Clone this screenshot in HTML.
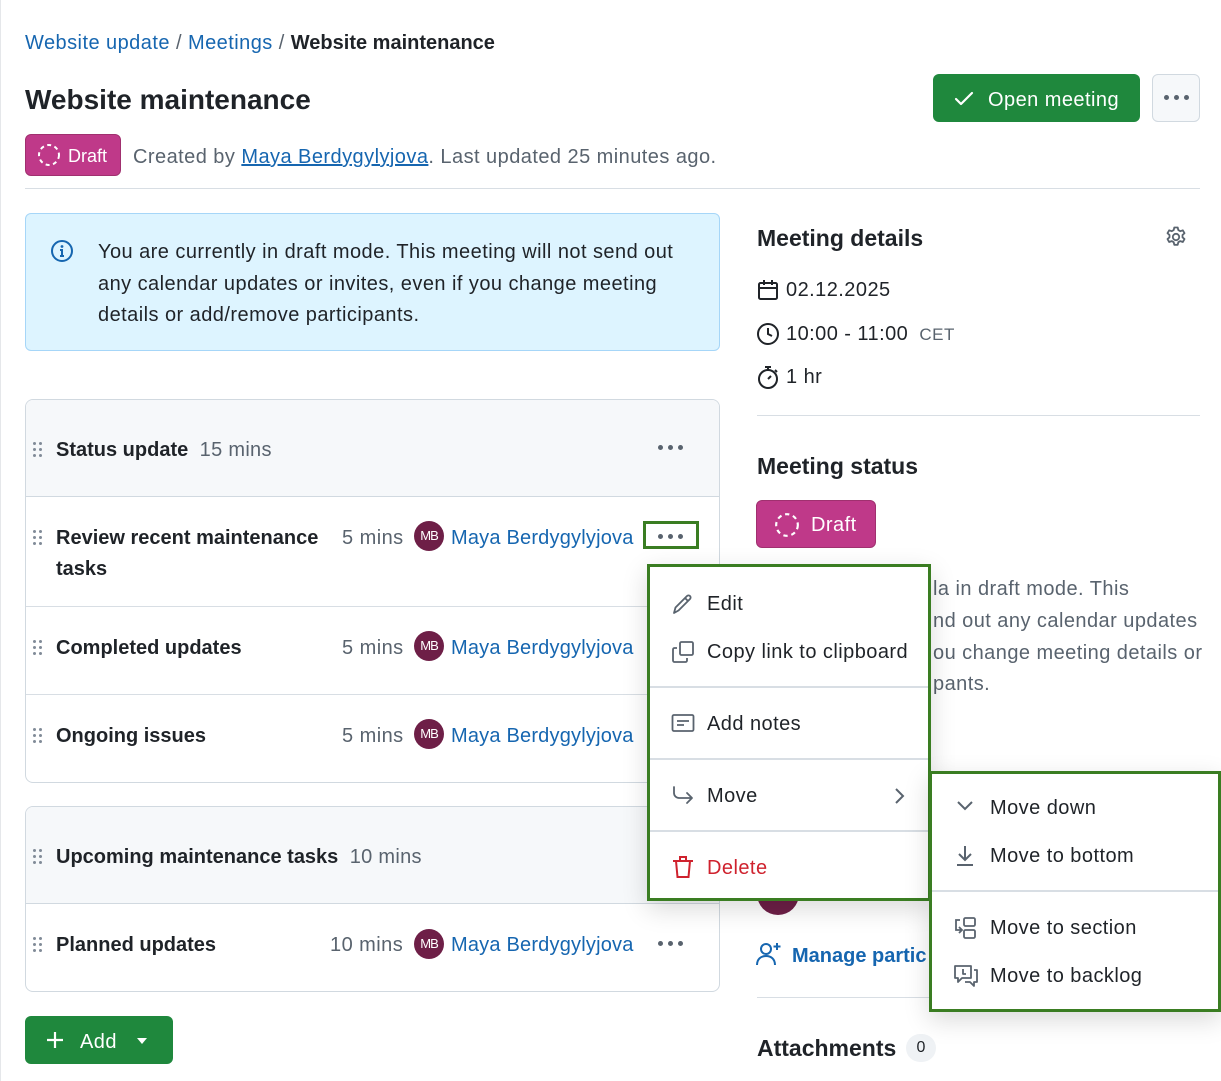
<!DOCTYPE html>
<html><head><meta charset="utf-8"><style>
*{box-sizing:border-box;margin:0;padding:0}
body{width:1221px;height:1081px;position:relative;overflow:hidden;background:#fff;font-family:"Liberation Sans",sans-serif;color:#1f2328}
.a{position:absolute}
.t{position:absolute;white-space:nowrap;height:30px;line-height:30px;font-size:20px;letter-spacing:.45px}
.b{font-weight:bold;letter-spacing:0}
.link{color:#1666b0}
.nm{letter-spacing:.2px}
.mut{color:#59636e}
.dots{position:absolute;width:26px;height:6px}
.dots i{position:absolute;top:0;width:5px;height:5px;border-radius:50%;background:#59636e}
.grip{position:absolute;width:10px;height:16px}
.grip i{position:absolute;width:3px;height:3px;border-radius:50%;background:#818b98}
.av{position:absolute;width:30px;height:30px;border-radius:50%;background:#6e1f47;color:#fff;font-size:13px;line-height:30px;text-align:center;letter-spacing:-1px}
.hr{position:absolute;height:1px;background:#d8dee4}
</style></head><body>
<div class="a" style="left:0;top:0;width:1px;height:1081px;background:#e5e7ea"></div>

<!-- breadcrumb -->
<div class="t" style="left:25px;top:28px"><span class="link">Website update</span> <span style="color:#59636e">/</span> <span class="link">Meetings</span> <span style="color:#59636e">/</span> <span class="b">Website maintenance</span></div>
<div class="t b" style="left:25px;top:83px;font-size:28px;height:34px;line-height:34px">Website maintenance</div>

<div class="a" style="left:25px;top:134px;width:96px;height:42px;background:#bf3989;border-radius:6px;border:1px solid #a0306f"></div>
<svg class="a" style="left:37px;top:143px" width="24" height="24" viewBox="0 0 24 24"><circle cx="12" cy="12" r="10" fill="none" stroke="#fff" stroke-width="2" stroke-dasharray="4 3.5"/></svg>
<div class="t" style="left:68px;top:141px;color:#fff;font-size:18px;letter-spacing:0">Draft</div>
<div class="t mut" style="left:133px;top:142px">Created by <span style="color:#1666b0;text-decoration:underline">Maya Berdygylyjova</span>. Last updated 25 minutes ago.</div>

<!-- header buttons -->
<div class="a" style="left:933px;top:74px;width:207px;height:48px;background:#1f883d;border-radius:6px"></div>
<svg class="a" style="left:953px;top:88px" width="22" height="22" viewBox="0 0 22 22"><path d="M3 11l5 5L19 5" fill="none" stroke="#fff" stroke-width="2.2" stroke-linecap="round" stroke-linejoin="round"/></svg>
<div class="t" style="left:988px;top:85px;color:#fff">Open meeting</div>
<div class="a" style="left:1152px;top:74px;width:48px;height:48px;background:#f6f8fa;border:1px solid #d1d9e0;border-radius:6px"></div>
<div class="dots" style="left:1164px;top:95px"><i style="left:0"></i><i style="left:10px"></i><i style="left:20px"></i></div>

<div class="hr" style="left:25px;top:188px;width:1175px"></div>

<!-- info box -->
<div class="a" style="left:25px;top:213px;width:695px;height:138px;background:#ddf4ff;border:1px solid #a6d6f8;border-radius:6px"></div>
<svg class="a" style="left:50px;top:239px" width="24" height="24" viewBox="0 0 24 24"><circle cx="12" cy="12" r="10" fill="none" stroke="#1666b0" stroke-width="2"/><circle cx="12" cy="7.5" r="1.4" fill="#1666b0"/><path d="M10 11h2v6M10 17h4" stroke="#1666b0" stroke-width="2" fill="none"/></svg>
<div class="t" style="left:98px;top:237px">You are currently in draft mode. This meeting will not send out</div>
<div class="t" style="left:98px;top:269px">any calendar updates or invites, even if you change meeting</div>
<div class="t" style="left:98px;top:300px">details or add/remove participants.</div>

<!-- section 1 -->
<div class="a" style="left:25px;top:399px;width:695px;height:384px;border:1px solid #d1d9e0;border-radius:8px;background:#fff;overflow:hidden">
  <div class="a" style="left:0;top:0;width:100%;height:97px;background:#f6f8fa;border-bottom:1px solid #d1d9e0"></div>
  <div class="hr" style="left:0;top:206px;width:100%"></div>
  <div class="hr" style="left:0;top:294px;width:100%"></div>
</div>
<div class="grip" style="left:33px;top:442px"><i style="left:0;top:0"></i><i style="left:6px;top:0"></i><i style="left:0;top:6px"></i><i style="left:6px;top:6px"></i><i style="left:0;top:12px"></i><i style="left:6px;top:12px"></i></div>
<div class="t b" style="left:56px;top:435px">Status update <span class="mut" style="font-weight:normal;letter-spacing:.3px">&nbsp;15 mins</span></div>
<div class="dots" style="left:658px;top:445px"><i style="left:0"></i><i style="left:10px"></i><i style="left:20px"></i></div>

<div class="grip" style="left:33px;top:530px"><i style="left:0;top:0"></i><i style="left:6px;top:0"></i><i style="left:0;top:6px"></i><i style="left:6px;top:6px"></i><i style="left:0;top:12px"></i><i style="left:6px;top:12px"></i></div>
<div class="t b" style="left:56px;top:523px">Review recent maintenance</div>
<div class="t b" style="left:56px;top:554px">tasks</div>
<div class="t mut" style="left:342px;top:523px">5 mins</div>
<div class="av" style="left:414px;top:521px">MB</div>
<div class="t link nm" style="left:451px;top:523px">Maya Berdygylyjova</div>
<div class="a" style="left:643px;top:521px;width:56px;height:28px;border:3px solid #3a7d22"></div>
<div class="dots" style="left:658px;top:534px"><i style="left:0"></i><i style="left:10px"></i><i style="left:20px"></i></div>

<div class="grip" style="left:33px;top:640px"><i style="left:0;top:0"></i><i style="left:6px;top:0"></i><i style="left:0;top:6px"></i><i style="left:6px;top:6px"></i><i style="left:0;top:12px"></i><i style="left:6px;top:12px"></i></div>
<div class="t b" style="left:56px;top:633px">Completed updates</div>
<div class="t mut" style="left:342px;top:633px">5 mins</div>
<div class="av" style="left:414px;top:631px">MB</div>
<div class="t link nm" style="left:451px;top:633px">Maya Berdygylyjova</div>

<div class="grip" style="left:33px;top:728px"><i style="left:0;top:0"></i><i style="left:6px;top:0"></i><i style="left:0;top:6px"></i><i style="left:6px;top:6px"></i><i style="left:0;top:12px"></i><i style="left:6px;top:12px"></i></div>
<div class="t b" style="left:56px;top:721px">Ongoing issues</div>
<div class="t mut" style="left:342px;top:721px">5 mins</div>
<div class="av" style="left:414px;top:719px">MB</div>
<div class="t link nm" style="left:451px;top:721px">Maya Berdygylyjova</div>

<!-- section 2 -->
<div class="a" style="left:25px;top:806px;width:695px;height:186px;border:1px solid #d1d9e0;border-radius:8px;background:#fff;overflow:hidden">
  <div class="a" style="left:0;top:0;width:100%;height:97px;background:#f6f8fa;border-bottom:1px solid #d1d9e0"></div>
</div>
<div class="grip" style="left:33px;top:849px"><i style="left:0;top:0"></i><i style="left:6px;top:0"></i><i style="left:0;top:6px"></i><i style="left:6px;top:6px"></i><i style="left:0;top:12px"></i><i style="left:6px;top:12px"></i></div>
<div class="t b" style="left:56px;top:842px">Upcoming maintenance tasks <span class="mut" style="font-weight:normal;letter-spacing:.3px">&nbsp;10 mins</span></div>
<div class="grip" style="left:33px;top:937px"><i style="left:0;top:0"></i><i style="left:6px;top:0"></i><i style="left:0;top:6px"></i><i style="left:6px;top:6px"></i><i style="left:0;top:12px"></i><i style="left:6px;top:12px"></i></div>
<div class="t b" style="left:56px;top:930px">Planned updates</div>
<div class="t mut" style="left:330px;top:930px">10 mins</div>
<div class="av" style="left:414px;top:929px">MB</div>
<div class="t link nm" style="left:451px;top:930px">Maya Berdygylyjova</div>
<div class="dots" style="left:658px;top:941px"><i style="left:0"></i><i style="left:10px"></i><i style="left:20px"></i></div>

<!-- add button -->
<div class="a" style="left:25px;top:1016px;width:148px;height:48px;background:#1f883d;border-radius:6px"></div>
<svg class="a" style="left:45px;top:1030px" width="20" height="20" viewBox="0 0 20 20"><path d="M10 2v16M2 10h16" stroke="#fff" stroke-width="2.2"/></svg>
<div class="t" style="left:80px;top:1027px;color:#fff">Add</div>
<svg class="a" style="left:136px;top:1037px" width="12" height="8" viewBox="0 0 12 8"><path d="M1 1h10L6 7z" fill="#fff"/></svg>

<!-- right column -->
<div class="t b" style="left:757px;top:223px;font-size:23px">Meeting details</div>
<svg class="a" style="left:1164px;top:225px" width="24" height="24" viewBox="0 0 24 24" fill="none" stroke="#59636e" stroke-width="1.8"><circle cx="12" cy="12" r="3.2"/><path d="M10.3 2.5h3.4l.6 2.6 2 1.1 2.5-.9 1.7 2.9-2 1.8v2.3l2 1.8-1.7 2.9-2.5-.9-2 1.1-.6 2.6h-3.4l-.6-2.6-2-1.1-2.5.9-1.7-2.9 2-1.8V10l-2-1.8 1.7-2.9 2.5.9 2-1.1z" stroke-linejoin="round"/></svg>
<svg class="a" style="left:756px;top:278px" width="24" height="24" viewBox="0 0 24 24" fill="none" stroke="#1f2328" stroke-width="2"><rect x="3" y="5" width="18" height="16" rx="1.5"/><path d="M3 10h18M8 2v5M16 2v5"/></svg>
<div class="t" style="left:786px;top:275px">02.12.2025</div>
<svg class="a" style="left:756px;top:322px" width="24" height="24" viewBox="0 0 24 24" fill="none" stroke="#1f2328" stroke-width="2"><circle cx="12" cy="12" r="10"/><path d="M12 6v6l4 2"/></svg>
<div class="t" style="left:786px;top:319px">10:00 - 11:00 <span class="mut" style="font-size:17px">&nbsp;CET</span></div>
<svg class="a" style="left:756px;top:364px" width="24" height="26" viewBox="0 0 24 26" fill="none" stroke="#1f2328" stroke-width="2"><circle cx="12" cy="15" r="9"/><path d="M9 3h6M12 3v3M12 15l3-3M19 6l2 2"/></svg>
<div class="t" style="left:786px;top:362px">1 hr</div>
<div class="hr" style="left:757px;top:415px;width:443px"></div>
<div class="t b" style="left:757px;top:451px;font-size:23px">Meeting status</div>
<div class="a" style="left:756px;top:500px;width:120px;height:48px;background:#bf3989;border-radius:6px;border:1px solid #a0306f"></div>
<svg class="a" style="left:774px;top:512px" width="26" height="26" viewBox="0 0 24 24"><circle cx="12" cy="12" r="10" fill="none" stroke="#fff" stroke-width="2" stroke-dasharray="4 3.5"/></svg>
<div class="t" style="left:811px;top:510px;color:#fff">Draft</div>
<div class="t mut" style="left:933px;top:574px">la in draft mode. This</div>
<div class="t mut" style="left:933px;top:606px">nd out any calendar updates</div>
<div class="t mut" style="left:933px;top:638px">ou change meeting details or</div>
<div class="t mut" style="left:933px;top:669px">pants.</div>
<div class="a" style="left:757px;top:885px;width:42px;height:30px;border-radius:0 0 21px 21px;background:#6e1f47"></div>
<svg class="a" style="left:755px;top:941px" width="28" height="26" viewBox="0 0 28 26" fill="none" stroke="#1666b0" stroke-width="2"><circle cx="11" cy="8" r="5"/><path d="M2 24c0-6 4-9 9-9s9 3 9 9M22 2v7M18.5 5.5h7"/></svg>
<div class="t b link" style="left:792px;top:941px">Manage partic</div>
<div class="hr" style="left:757px;top:997px;width:443px"></div>
<div class="t b" style="left:757px;top:1033px;font-size:23px">Attachments</div>
<div class="a" style="left:906px;top:1034px;width:30px;height:28px;border-radius:14px;background:#eff2f5;font-size:16px;line-height:28px;text-align:center">0</div>

<!-- menu 1 -->
<div class="a" style="left:647px;top:564px;width:284px;height:337px;background:#fff;border:3px solid #3a7d22;box-shadow:0 8px 24px rgba(0,0,0,.15)">
  <div class="hr" style="left:0;top:119px;width:100%;height:2px"></div>
  <div class="hr" style="left:0;top:191px;width:100%;height:2px"></div>
  <div class="hr" style="left:0;top:263px;width:100%;height:2px"></div>
</div>
<svg class="a" style="left:671px;top:592px" width="24" height="24" viewBox="0 0 24 24" fill="none" stroke="#59636e" stroke-width="1.8" stroke-linejoin="round"><path d="M3 21l1.5-5.5L16 4a2.1 2.1 0 0 1 3 3L7.5 18.5z"/><path d="M14 6l3 3"/></svg>
<div class="t" style="left:707px;top:589px">Edit</div>
<svg class="a" style="left:671px;top:640px" width="24" height="24" viewBox="0 0 24 24" fill="none" stroke="#59636e" stroke-width="1.8"><rect x="9" y="2" width="13" height="13" rx="1.5"/><path d="M6 8H3.5A1.5 1.5 0 0 0 2 9.5v11A1.5 1.5 0 0 0 3.5 22h11a1.5 1.5 0 0 0 1.5-1.5V18"/></svg>
<div class="t" style="left:707px;top:637px">Copy link to clipboard</div>
<svg class="a" style="left:671px;top:713px" width="24" height="22" viewBox="0 0 24 22" fill="none" stroke="#59636e" stroke-width="1.8"><rect x="1.5" y="2" width="21" height="16" rx="1.5"/><path d="M6 8h12M6 12h7"/></svg>
<div class="t" style="left:707px;top:709px">Add notes</div>
<svg class="a" style="left:671px;top:784px" width="24" height="24" viewBox="0 0 24 24" fill="none" stroke="#59636e" stroke-width="1.8" stroke-linecap="round" stroke-linejoin="round"><path d="M3 3v6a5 5 0 0 0 5 5h13M16 9l5 5-5 5"/></svg>
<div class="t" style="left:707px;top:781px">Move</div>
<svg class="a" style="left:892px;top:786px" width="14" height="20" viewBox="0 0 14 20" fill="none" stroke="#59636e" stroke-width="2"><path d="M4 3l7 7-7 7"/></svg>
<svg class="a" style="left:672px;top:855px" width="22" height="24" viewBox="0 0 22 24" fill="none" stroke="#cf222e" stroke-width="2"><path d="M1 6h20M8 6V2h6v4M4 6l1.5 16h11L18 6"/></svg>
<div class="t" style="left:707px;top:853px;color:#cf222e">Delete</div>

<!-- menu 2 -->
<div class="a" style="left:929px;top:771px;width:292px;height:241px;background:#fff;border:3px solid #3a7d22;box-shadow:0 8px 24px rgba(0,0,0,.15)">
  <div class="hr" style="left:0;top:116px;width:100%;height:2px"></div>
</div>
<svg class="a" style="left:955px;top:798px" width="20" height="16" viewBox="0 0 20 16" fill="none" stroke="#59636e" stroke-width="2"><path d="M3 4l7 7 7-7"/></svg>
<div class="t" style="left:990px;top:793px">Move down</div>
<svg class="a" style="left:955px;top:844px" width="20" height="24" viewBox="0 0 20 24" fill="none" stroke="#59636e" stroke-width="2"><path d="M10 2v14M4 10l6 6 6-6M2 21h16"/></svg>
<div class="t" style="left:990px;top:841px">Move to bottom</div>
<svg class="a" style="left:953px;top:916px" width="24" height="24" viewBox="0 0 24 24" fill="none" stroke="#59636e" stroke-width="1.8"><rect x="11" y="2" width="11" height="8" rx="1.5"/><rect x="11" y="14" width="11" height="8" rx="1.5"/><path d="M7 4H3v10h5M6 11l3 3-3 3"/></svg>
<div class="t" style="left:990px;top:913px">Move to section</div>
<svg class="a" style="left:953px;top:964px" width="26" height="24" viewBox="0 0 26 24" fill="none" stroke="#59636e" stroke-width="1.8" stroke-linejoin="round"><path d="M2 2h16v12H9l-4 4v-4H2z"/><path d="M21 6h3v12h-3v4l-4-4h-5"/><path d="M10 5v5h3"/></svg>
<div class="t" style="left:990px;top:961px">Move to backlog</div>

</body></html>
